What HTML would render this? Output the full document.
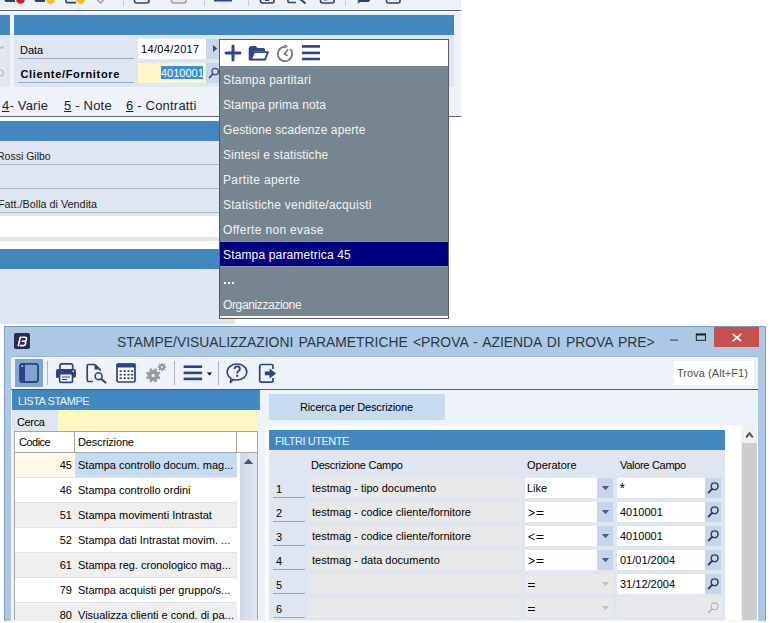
<!DOCTYPE html>
<html><head><meta charset="utf-8">
<style>
*{margin:0;padding:0;box-sizing:border-box}
html,body{width:770px;height:623px;overflow:hidden;background:#fff;font-family:"Liberation Sans",sans-serif;font-size:11px;color:#000}
.a{position:absolute}
.t{position:absolute;white-space:nowrap;line-height:1}
</style></head><body>
<!-- ============ TOP BACKGROUND WINDOW ============ -->
<div class="a" style="left:0;top:0;width:461px;height:10px;background:#eef1f9"></div>
<svg class="a" style="left:0;top:0" width="461" height="10" viewBox="0 0 461 10">
<g fill="none" stroke="#2d3f7c" stroke-width="2">
<path d="M5.5 -2 V0 Q5.5 1 6.5 1 H15" stroke-width="2.2"/>
<path d="M35.5 -2 V0 Q35.5 1 36.5 1 H45" stroke-width="2.2"/>
<path d="M66 -3 V1.5 Q66 2.6 67 2.6 H76" stroke-width="1.6"/>
<rect x="134.5" y="-6" width="14.5" height="9" rx="2" stroke-width="1.6"/>
<rect x="260.5" y="-6" width="13.5" height="9" rx="2" stroke-width="1.6"/>
<rect x="320.5" y="-6" width="13.5" height="9" rx="2" stroke-width="1.6"/>
<rect x="386.5" y="-6" width="13.5" height="9" rx="2" stroke-width="1.6"/>
<path d="M288 -3 V1.5 Q288 2.5 289 2.5 H296" stroke-width="1.6"/>
<path d="M300 -1 L305.5 3.5" stroke-width="2"/>
</g>
<rect x="171.5" y="-6" width="14.5" height="9" rx="2" fill="#e9e9e9" stroke="#9e9e9e" stroke-width="1.6"/>
<rect x="214" y="-2" width="18" height="3.5" fill="#2d3f7c"/>
<rect x="265" y="-2" width="4" height="3" fill="#2d3f7c"/>
<rect x="324" y="-2" width="3" height="2.5" fill="#2d3f7c"/>
<path d="M357 -3 H370 V0 Q370 2 367 2 H361 L357 3.5 L358.5 1 Q357 0 357 -1 Z" fill="#2d3f7c"/>
<path d="M96.5 -1 L100.5 3 L104.5 -1" fill="none" stroke="#a0a0a0" stroke-width="1.5"/>
<circle cx="20.5" cy="-0.5" r="4.3" fill="#c8202a"/>
<circle cx="50.5" cy="-0.5" r="4.4" fill="#efc21a"/>
<circle cx="80.7" cy="-0.5" r="4.4" fill="#efc21a"/>
<g stroke="#c9ced8" stroke-width="1"><path d="M123.5 0 V6"/><path d="M204.5 0 V6"/><path d="M248.5 0 V6"/><path d="M345.5 0 V6"/></g>
</svg>
<div class="a" style="left:0;top:11px;width:461px;height:106px;background:#eef2f9"></div>
<div class="a" style="left:0;top:9px;width:461px;height:1px;background:#f8fbff"></div>
<div class="a" style="left:0;top:10px;width:461px;height:1px;background:#505b68"></div>
<div class="a" style="left:0;top:11px;width:461px;height:1px;background:#fafcff"></div>
<div class="a" style="left:0;top:14px;width:10px;height:1px;background:#dcf0fa"></div>
<div class="a" style="left:14px;top:14px;width:440px;height:1px;background:#dcf0fa"></div>
<div class="a" style="left:0;top:15px;width:10px;height:20px;background:#4387c1"></div>
<div class="a" style="left:14px;top:15px;width:440px;height:20px;background:#4387c1"></div>
<div class="a" style="left:0;top:35px;width:10px;height:52px;background:#dfe6f1"></div>
<div class="a" style="left:0;top:35px;width:10px;height:1px;background:#d3ebf9"></div>
<div class="a" style="left:0;top:39px;width:6px;height:20px;background:#e6e9ee"></div>
<div class="a" style="left:0;top:63px;width:6px;height:20px;background:#e6e9ee"></div>
<div class="a" style="left:14px;top:35px;width:440px;height:52px;background:#dfe6f1"></div>
<div class="a" style="left:14px;top:35px;width:440px;height:1px;background:#d3ebf9"></div>
<div class="a" style="left:18px;top:58px;width:116px;height:1px;background:#97aac0"></div>
<div class="a" style="left:18px;top:82px;width:116px;height:1px;background:#97aac0"></div>
<div class="t" style="left:20px;top:45px;font-size:11px">Data</div>
<div class="t" style="left:20.5px;top:69px;font-size:11px;letter-spacing:0.68px;font-weight:bold">Cliente/Fornitore</div>
<div class="a" style="left:138px;top:39px;width:68px;height:20px;background:#fff"></div>
<div class="a" style="left:206px;top:39px;width:13px;height:20px;background:#c9d7ea"></div>
<div class="t" style="left:141px;top:44px;font-size:11px;letter-spacing:0.35px">14/04/2017</div>
<div class="a" style="left:138px;top:63px;width:68px;height:20px;background:#fdf6c6"></div>
<div class="a" style="left:206px;top:63px;width:13px;height:20px;background:#c9d7ea"></div>
<div class="a" style="left:161px;top:66px;width:42px;height:13px;background:#3b8fdd"></div>
<div class="t" style="left:161px;top:68px;font-size:11px;color:#fff">4010001</div>

<svg class="a" style="left:0;top:35px" width="220" height="52" viewBox="0 35 220 52">
<path d="M213 45 L217.3 48.5 L213 52 Z" fill="#3b4a68"/>
<circle cx="215.2" cy="71.6" r="3.2" fill="none" stroke="#3b4a68" stroke-width="1.3"/>
<path d="M212.8 74 L209.5 77.6" stroke="#3b4a68" stroke-width="1.6" stroke-linecap="round"/>
<path d="M-1 46 L1.5 48.5 L4 46" fill="none" stroke="#b0b0b0" stroke-width="1.2"/>
<circle cx="0.5" cy="73" r="3" fill="none" stroke="#b8b8b8" stroke-width="1.2"/>
</svg>
<div class="t" style="left:2px;top:99px;font-size:13px;letter-spacing:0.2px;color:#1c2330"><u>4</u>- Varie</div>
<div class="t" style="left:64px;top:99px;font-size:13px;letter-spacing:0.2px;color:#1c2330"><u>5</u> - Note</div>
<div class="t" style="left:126px;top:99px;font-size:13px;letter-spacing:0.2px;color:#1c2330"><u>6</u> - Contratti</div>
<div class="a" style="left:0;top:116px;width:461px;height:1px;background:#5f6670"></div>

<div class="a" style="left:0;top:117px;width:235px;height:207px;background:#dfe6f1"></div>
<div class="a" style="left:0;top:117px;width:235px;height:4px;background:#f6fbfe"></div>
<div class="a" style="left:0;top:121px;width:235px;height:20px;background:#4387c1;border-top:1px solid #4a82b4;border-bottom:1px solid #4a7eae"></div>
<div class="a" style="left:0;top:141px;width:235px;height:1px;background:#d3ebf9"></div>
<div class="a" style="left:0;top:164px;width:235px;height:1px;background:#a9bbd0"></div>
<div class="a" style="left:0;top:188px;width:235px;height:1px;background:#a9bbd0"></div>
<div class="a" style="left:0;top:212px;width:235px;height:1px;background:#a9bbd0"></div>
<div class="t" style="left:-3px;top:151px;font-size:10.5px;color:#1a1a1a">Rossi Gilbo</div>
<div class="t" style="left:-2px;top:199px;font-size:10.8px;color:#1a1a1a">Fatt./Bolla di Vendita</div>
<div class="a" style="left:0;top:216px;width:235px;height:21px;background:#fff"></div>
<div class="a" style="left:0;top:241px;width:235px;height:8px;background:#fff"></div>
<div class="a" style="left:0;top:249px;width:235px;height:20px;background:#4387c1"></div>

<!-- ============ POPUP MENU ============ -->
<div class="a" style="left:219px;top:39px;width:230px;height:280px;border:1px solid #5a5a5a;background:#768590"></div>
<div class="a" style="left:220px;top:40px;width:228px;height:26px;background:#fff"></div>
<div class="a" style="left:220px;top:316px;width:228px;height:2px;background:#f4f6fa"></div>
<svg class="a" style="left:220px;top:40px" width="228" height="26" viewBox="0 0 228 26">
<g stroke="#2e4590" stroke-width="3" stroke-linecap="round" fill="none">
<path d="M6 13 H20"/><path d="M13 6 V20"/>
</g>
<path d="M29 8 Q29 6 31 6 H35.5 L37.5 8 H43.5 Q45 8 45 9.5 V11.2 H34 L31.2 19.8 H29 Z" fill="#2e4590"/>
<path d="M34.2 12.2 H48 L45 19.6 H30.8 Z" fill="none" stroke="#2e4590" stroke-width="1.8" stroke-linejoin="round"/>
<path d="M29.5 8 V19.5 H45" fill="none" stroke="#2e4590" stroke-width="1.6"/>
<path d="M70.1 9 A7.2 7.2 0 1 1 64.4 6.8" fill="none" stroke="#7a7a7a" stroke-width="1.8"/>
<path d="M64.4 4.2 L68.2 6.4 L64.4 8.6 Z" fill="#7a7a7a"/>
<path d="M68 9.3 L64.6 14 L67.8 15.8" fill="none" stroke="#7a7a7a" stroke-width="1.7"/>
<g stroke="#2e4590" stroke-width="2.6"><path d="M82 6.4 H100"/><path d="M82 12.9 H100"/><path d="M82 19 H100"/></g>
</svg>
<div class="a" style="left:220px;top:241px;width:228px;height:1px;background:#8290c6"></div>
<div class="a" style="left:220px;top:242px;width:228px;height:24px;background:#000080"></div>
<div class="a" style="left:220px;top:266px;width:228px;height:1px;background:#8794a6"></div>
<div class="t" style="left:223px;top:74px;letter-spacing:0.21px;font-size:12px;color:#f4f4f4">Stampa partitari</div>
<div class="t" style="left:223px;top:99px;letter-spacing:0.09px;font-size:12px;color:#f4f4f4">Stampa prima nota</div>
<div class="t" style="left:223px;top:124px;letter-spacing:0.10px;font-size:12px;color:#f4f4f4">Gestione scadenze aperte</div>
<div class="t" style="left:223px;top:149px;letter-spacing:0.12px;font-size:12px;color:#f4f4f4">Sintesi e statistiche</div>
<div class="t" style="left:223px;top:174px;letter-spacing:0.36px;font-size:12px;color:#f4f4f4">Partite aperte</div>
<div class="t" style="left:223px;top:199px;letter-spacing:0.26px;font-size:12px;color:#f4f4f4">Statistiche vendite/acquisti</div>
<div class="t" style="left:223px;top:224px;letter-spacing:0.33px;font-size:12px;color:#f4f4f4">Offerte non evase</div>
<div class="t" style="left:223px;top:249px;letter-spacing:0.15px;font-size:12px;color:#fff">Stampa parametrica 45</div>
<div class="a" style="left:224px;top:282px;width:2px;height:2px;background:#f4f4f4"></div><div class="a" style="left:228px;top:282px;width:2px;height:2px;background:#f4f4f4"></div><div class="a" style="left:232px;top:282px;width:2px;height:2px;background:#f4f4f4"></div>
<div class="t" style="left:223px;top:299px;letter-spacing:-0.37px;font-size:12px;color:#f4f4f4">Organizzazione</div>

<!-- ============ BOTTOM WINDOW ============ -->
<div class="a" style="left:4px;top:326px;width:762px;height:297px;background:#adc8e4;border:1px solid #7d9cc0;border-bottom:none"></div>
<div class="a" style="left:14px;top:333px;width:16px;height:16px;background:#2b2a57;border-radius:2px"></div>
<svg class="a" style="left:14px;top:333px" width="16" height="16" viewBox="14 333 16 16">
<path d="M18.3 345.6 L20.3 337.2" stroke="#fff" stroke-width="1.6" stroke-linecap="round"/>
<path d="M21.2 337.3 H25 Q26.8 337.3 26.4 339.2 L26.2 340 Q25.9 341.2 24.4 341.3 H21.6 M24.4 341.3 Q26 341.5 25.6 343.3 L25.4 344.2 Q25.1 345.6 23.5 345.6 H19.8" fill="none" stroke="#fff" stroke-width="1.6"/>
</svg>
<div class="t" style="left:116.5px;top:334px;font-size:15px;transform:scaleX(0.925);transform-origin:0 0;word-spacing:1.5px;color:#283746">STAMPE/VISUALIZZAZIONI PARAMETRICHE &lt;PROVA - AZIENDA DI PROVA PRE&gt;</div>
<div class="a" style="left:714px;top:327px;width:45px;height:20px;background:#c75050"></div>
<svg class="a" style="left:660px;top:327px" width="100" height="20" viewBox="660 327 100 20">
<path d="M732.8 334.2 L741.2 341.2 M741.2 334.2 L732.8 341.2" stroke="#fff" stroke-width="1.7"/>
<rect x="696.3" y="334.3" width="9.2" height="6" fill="none" stroke="#1f1f1f" stroke-width="1"/>
<rect x="696" y="333.5" width="10" height="2" fill="#1f1f1f"/>
<rect x="670" y="339.3" width="8" height="1.6" fill="#5b6e86"/>
</svg>

<div class="a" style="left:11px;top:356px;width:747px;height:34px;background:#eef2f9;border-top:1px solid #9fb6d1"></div>
<div class="a" style="left:11px;top:389px;width:747px;height:1px;background:#4f5d6e"></div>
<div class="a" style="left:15px;top:359px;width:28px;height:28px;background:#7fa7d1"></div>
<svg class="a" style="left:11px;top:356px" width="280" height="34" viewBox="11 356 280 34">
<!-- panel icon -->
<rect x="20" y="363.8" width="18" height="18.2" rx="2.5" fill="#7ea7d0" stroke="#2e4187" stroke-width="1.8"/>
<path d="M20 366 Q20 363 22.5 363 H25 V383 H22.5 Q20 383 20 380.5 Z" fill="#2e4187"/>
<circle cx="22.3" cy="366.2" r="0.9" fill="#c8d8ee"/>
<!-- separators -->
<g stroke="#aab3bf" stroke-width="1"><path d="M47.5 361 V385"/><path d="M174.5 361 V385"/><path d="M218.5 361 V385"/></g>
<!-- printer -->
<path d="M60 369 V365.5 Q60 363.8 61.7 363.8 H71 Q72.7 363.8 72.7 365.5 V369" fill="none" stroke="#2e4187" stroke-width="1.7"/>
<path d="M56 371 Q56 369 58 369 H74 Q76 369 76 371 V376 Q76 377.8 74.2 377.8 H56 Z" fill="#2e4187"/>
<rect x="59.6" y="373.8" width="12.9" height="8.6" rx="1.2" fill="#eef2f9" stroke="#2e4187" stroke-width="1.6"/>
<path d="M62 377 H70 M62 379.5 H67" stroke="#2e4187" stroke-width="1"/>
<circle cx="73.3" cy="371.4" r="0.8" fill="#fff"/>
<!-- doc magnifier -->
<path d="M95 364.5 H88.5 Q87.2 364.5 87.2 366 V380 Q87.2 381.5 88.5 381.5 H93" fill="none" stroke="#2e4187" stroke-width="1.7"/>
<path d="M94.5 364 L100.5 369.5 H94.5 Z" fill="#2e4187"/>
<path d="M95 364.5 L100.2 369.5 V371" fill="none" stroke="#2e4187" stroke-width="1.5"/>
<circle cx="98.6" cy="376.3" r="3.5" fill="none" stroke="#2e4187" stroke-width="1.6"/>
<path d="M101.2 378.9 L105.4 382.6" stroke="#2e4187" stroke-width="2" stroke-linecap="round"/>
<!-- calendar -->
<rect x="117" y="364" width="18" height="18" rx="1.5" fill="#fff" stroke="#2e4187" stroke-width="1.7"/>
<rect x="116.5" y="363.4" width="19" height="4" rx="1.2" fill="#2e4187"/>
<g fill="#2e4187">
<rect x="119.6" y="370.3" width="2.2" height="1.7"/><rect x="123.6" y="370.3" width="2.2" height="1.7"/><rect x="127.4" y="370.3" width="2.2" height="1.7"/><rect x="131" y="370.3" width="2.2" height="1.7"/>
<rect x="119.6" y="373.8" width="2.2" height="1.7"/><rect x="123.6" y="373.8" width="2.2" height="1.7"/><rect x="127.4" y="373.8" width="2.2" height="1.7"/><rect x="131" y="373.8" width="2.2" height="1.7"/>
<rect x="119.6" y="377.3" width="2.2" height="1.7"/><rect x="123.6" y="377.3" width="2.2" height="1.7"/><rect x="127.4" y="377.3" width="2.2" height="1.7"/><rect x="131" y="377.3" width="2.2" height="1.7"/>
</g>
<!-- gears -->
<circle cx="153.2" cy="375.4" r="5.6" fill="#9b9b9b"/><path d="M157.45 377.16 L159.94 378.19 M154.96 379.65 L155.99 382.14 M151.44 379.65 L150.41 382.14 M148.95 377.16 L146.46 378.19 M148.95 373.64 L146.46 372.61 M151.44 371.15 L150.41 368.66 M154.96 371.15 L155.99 368.66 M157.45 373.64 L159.94 372.61 " stroke="#9b9b9b" stroke-width="2.4"/><circle cx="153.2" cy="375.4" r="1.7" fill="#eef2f9"/>
<circle cx="162" cy="367.1" r="3.1" fill="#9b9b9b"/><path d="M164.10 367.10 L166.20 367.10 M163.48 368.58 L164.97 370.07 M162.00 369.20 L162.00 371.30 M160.52 368.58 L159.03 370.07 M159.90 367.10 L157.80 367.10 M160.52 365.62 L159.03 364.13 M162.00 365.00 L162.00 362.90 M163.48 365.62 L164.97 364.13 " stroke="#9b9b9b" stroke-width="1.5"/><circle cx="162" cy="367.1" r="1.0" fill="#eef2f9"/>
<!-- hamburger -->
<g stroke="#2e4187" stroke-width="2.6"><path d="M183.6 366.7 H202.1"/><path d="M183.6 372.9 H202.1"/><path d="M183.6 378.9 H202.1"/></g>
<path d="M206.8 372.4 H212.2 L209.5 375.4 Z" fill="#000"/>
<!-- help -->
<path d="M237 364 C242.6 364 246.8 367.4 246.8 372 C246.8 376.6 242.6 380 237 380 C235.6 380 234.4 379.8 233.2 379.4 L230.5 382.4 L230.9 378.2 C228.7 376.8 227.2 374.6 227.2 372 C227.2 367.4 231.4 364 237 364 Z" fill="none" stroke="#2e4187" stroke-width="1.6" stroke-linejoin="round"/>
<path d="M234.6 368.9 Q234.6 366.4 237.2 366.4 Q239.9 366.4 239.9 368.8 Q239.9 370.4 238.2 371.2 Q237.2 371.7 237.2 373.4" fill="none" stroke="#2e4187" stroke-width="1.8"/><circle cx="237.2" cy="375.9" r="1.1" fill="#2e4187"/>
<!-- exit -->
<path d="M273 369 V366 Q273 364.5 271.5 364.5 H261.2 Q259.7 364.5 259.7 366 V380.7 Q259.7 382.2 261.2 382.2 H271.5 Q273 382.2 273 380.7 V378" fill="none" stroke="#2e4187" stroke-width="1.7"/>
<path d="M264.8 371.6 H269.6 V368.4 L276 373.4 L269.6 378.4 V375.2 H264.8 Z" fill="#2e4187"/>
</svg>
<div class="a" style="left:674px;top:361px;width:80px;height:24px;background:#fff"></div>
<div class="t" style="left:677px;top:368px;font-size:11px;letter-spacing:0.05px;color:#505050">Trova (Alt+F1)</div>

<div class="a" style="left:11px;top:390px;width:747px;height:233px;background:#eef2f9"></div>
<div class="a" style="left:12px;top:390px;width:248px;height:20px;background:#4387c1"></div>
<div class="t" style="left:18px;top:396px;font-size:11px;letter-spacing:-0.45px;color:#e8f4ff">LISTA STAMPE</div>
<div class="a" style="left:12px;top:410px;width:246px;height:21px;background:#dfe6f1"></div>
<div class="a" style="left:58px;top:410px;width:200px;height:21px;background:#fdf8c2"></div>
<div class="t" style="left:17px;top:417px;font-size:11px;letter-spacing:-0.35px">Cerca</div>


<!-- grid -->
<div class="a" style="left:14px;top:431px;width:244px;height:189px;background:#fff;border:1px solid #a6a6a6;border-bottom:none"></div>
<div class="a" style="left:15px;top:452px;width:242px;height:1px;background:#a6a6a6"></div>
<div class="a" style="left:74px;top:432px;width:1px;height:20px;background:#a6a6a6"></div>
<div class="a" style="left:236px;top:432px;width:1px;height:20px;background:#a6a6a6"></div>
<div class="t" style="left:19px;top:437px;font-size:11px;letter-spacing:-0.5px">Codice</div>
<div class="t" style="left:78px;top:437px;font-size:11px;letter-spacing:-0.15px">Descrizione</div>
<div class="a" style="left:15px;top:453px;width:60px;height:24px;background:#fdf8ea"></div>
<div class="a" style="left:75px;top:453px;width:162px;height:24px;background:#c5dcf4"></div>
<div class="a" style="left:15px;top:477px;width:222px;height:1px;background:#dde3ea"></div>
<div class="t" style="left:15px;width:57px;text-align:right;top:460px;font-size:11px">45</div>
<div class="t" style="left:78px;top:460px;font-size:11px">Stampa controllo docum. mag...</div>
<div class="a" style="left:15px;top:502px;width:222px;height:1px;background:#dde3ea"></div>
<div class="t" style="left:15px;width:57px;text-align:right;top:485px;font-size:11px">46</div>
<div class="t" style="left:78px;top:485px;font-size:11px">Stampa controllo ordini</div>
<div class="a" style="left:15px;top:503px;width:222px;height:24px;background:#efefef"></div>
<div class="a" style="left:15px;top:527px;width:222px;height:1px;background:#dde3ea"></div>
<div class="t" style="left:15px;width:57px;text-align:right;top:510px;font-size:11px">51</div>
<div class="t" style="left:78px;top:510px;font-size:11px">Stampa movimenti Intrastat</div>
<div class="a" style="left:15px;top:552px;width:222px;height:1px;background:#dde3ea"></div>
<div class="t" style="left:15px;width:57px;text-align:right;top:535px;font-size:11px">52</div>
<div class="t" style="left:78px;top:535px;font-size:11px">Stampa dati Intrastat movim. ...</div>
<div class="a" style="left:15px;top:553px;width:222px;height:24px;background:#efefef"></div>
<div class="a" style="left:15px;top:577px;width:222px;height:1px;background:#dde3ea"></div>
<div class="t" style="left:15px;width:57px;text-align:right;top:560px;font-size:11px">61</div>
<div class="t" style="left:78px;top:560px;font-size:11px">Stampa reg. cronologico mag...</div>
<div class="a" style="left:15px;top:602px;width:222px;height:1px;background:#dde3ea"></div>
<div class="t" style="left:15px;width:57px;text-align:right;top:585px;font-size:11px">79</div>
<div class="t" style="left:78px;top:585px;font-size:11px">Stampa acquisti per gruppo/s...</div>
<div class="a" style="left:15px;top:603px;width:222px;height:24px;background:#efefef"></div>
<div class="a" style="left:15px;top:627px;width:222px;height:1px;background:#dde3ea"></div>
<div class="t" style="left:15px;width:57px;text-align:right;top:610px;font-size:11px">80</div>
<div class="t" style="left:78px;top:610px;font-size:11px">Visualizza clienti e cond. di pa...</div>
<div class="a" style="left:240px;top:453px;width:17px;height:167px;background:linear-gradient(90deg,#cfd9e6,#dde6f1)"></div>
<svg class="a" style="left:240px;top:453px" width="17" height="20" viewBox="240 453 17 20"><path d="M243.8 463.9 L248.4 458.8 L253.1 463.9 Z" fill="#4a5470"/></svg>

<!-- right panel -->
<div class="a" style="left:269px;top:394px;width:176px;height:26px;background:#c6daf1"></div>
<div class="t" style="left:300px;top:402px;font-size:11px;letter-spacing:-0.17px">Ricerca per Descrizione</div>
<div class="a" style="left:265px;top:426px;width:476px;height:194px;background:#fff"></div>
<div class="a" style="left:269px;top:430px;width:456px;height:190px;background:#dfe6f1"></div>
<div class="a" style="left:269px;top:430px;width:456px;height:20px;background:#4387c1"></div>
<div class="t" style="left:275px;top:436px;font-size:11px;letter-spacing:-0.45px;color:#e8f4ff">FILTRI UTENTE</div>
<div class="t" style="left:311px;top:460px;font-size:11px;letter-spacing:-0.25px">Descrizione Campo</div>
<div class="t" style="left:527px;top:460px;font-size:11px">Operatore</div>
<div class="t" style="left:620px;top:460px;font-size:11px;letter-spacing:-0.3px">Valore Campo</div>
<div class="a" style="left:742px;top:426px;width:15px;height:194px;background:#cdcdcd"></div>
<div class="a" style="left:742px;top:426px;width:15px;height:17px;background:#f0f0f0"></div>
<div class="a" style="left:757px;top:426px;width:1px;height:194px;background:#fff"></div>
<svg class="a" style="left:742px;top:426px" width="15" height="17" viewBox="742 426 15 17"><path d="M746.2 437.3 L749.5 433.3 L752.8 437.3" fill="none" stroke="#505050" stroke-width="2"/></svg>
<div class="t" style="left:276px;top:484px;font-size:11px">1</div>
<div class="a" style="left:273px;top:497px;width:32px;height:1px;background:#8ea7c4"></div>
<div class="a" style="left:309px;top:478px;width:212px;height:20px;background:#e9e9e9"></div>
<div class="t" style="left:312px;top:483px;font-size:11px">testmag - tipo documento</div>
<div class="a" style="left:525px;top:478px;width:72px;height:20px;background:#fff"></div>
<div class="a" style="left:597px;top:478px;width:16px;height:20px;background:#c5d6ec"></div>
<div class="t" style="left:527px;top:483px;font-size:11px">Like</div>
<div class="a" style="left:617px;top:478px;width:88px;height:20px;background:#fff"></div>
<div class="a" style="left:705px;top:478px;width:16px;height:20px;background:#c5d6ec"></div>
<div class="t" style="left:619.5px;top:481px;font-size:14px">*</div>
<div class="t" style="left:276px;top:508px;font-size:11px">2</div>
<div class="a" style="left:273px;top:521px;width:32px;height:1px;background:#8ea7c4"></div>
<div class="a" style="left:309px;top:502px;width:212px;height:20px;background:#e9e9e9"></div>
<div class="t" style="left:312px;top:507px;font-size:11px">testmag - codice cliente/fornitore</div>
<div class="a" style="left:525px;top:502px;width:72px;height:20px;background:#fff"></div>
<div class="a" style="left:597px;top:502px;width:16px;height:20px;background:#c5d6ec"></div>
<div class="a" style="left:617px;top:502px;width:88px;height:20px;background:#fff"></div>
<div class="a" style="left:705px;top:502px;width:16px;height:20px;background:#c5d6ec"></div>
<div class="t" style="left:620px;top:507px;font-size:11px">4010001</div>
<div class="t" style="left:276px;top:532px;font-size:11px">3</div>
<div class="a" style="left:273px;top:545px;width:32px;height:1px;background:#8ea7c4"></div>
<div class="a" style="left:309px;top:526px;width:212px;height:20px;background:#e9e9e9"></div>
<div class="t" style="left:312px;top:531px;font-size:11px">testmag - codice cliente/fornitore</div>
<div class="a" style="left:525px;top:526px;width:72px;height:20px;background:#fff"></div>
<div class="a" style="left:597px;top:526px;width:16px;height:20px;background:#c5d6ec"></div>
<div class="a" style="left:617px;top:526px;width:88px;height:20px;background:#fff"></div>
<div class="a" style="left:705px;top:526px;width:16px;height:20px;background:#c5d6ec"></div>
<div class="t" style="left:620px;top:531px;font-size:11px">4010001</div>
<div class="t" style="left:276px;top:556px;font-size:11px">4</div>
<div class="a" style="left:273px;top:569px;width:32px;height:1px;background:#8ea7c4"></div>
<div class="a" style="left:309px;top:550px;width:212px;height:20px;background:#e9e9e9"></div>
<div class="t" style="left:312px;top:555px;font-size:11px">testmag - data documento</div>
<div class="a" style="left:525px;top:550px;width:72px;height:20px;background:#fff"></div>
<div class="a" style="left:597px;top:550px;width:16px;height:20px;background:#c5d6ec"></div>
<div class="a" style="left:617px;top:550px;width:88px;height:20px;background:#fff"></div>
<div class="a" style="left:705px;top:550px;width:16px;height:20px;background:#c5d6ec"></div>
<div class="t" style="left:620px;top:555px;font-size:11px">01/01/2004</div>
<div class="t" style="left:276px;top:580px;font-size:11px">5</div>
<div class="a" style="left:273px;top:593px;width:32px;height:1px;background:#8ea7c4"></div>
<div class="a" style="left:309px;top:574px;width:212px;height:20px;background:#e9e9e9"></div>
<div class="t" style="left:312px;top:579px;font-size:11px"></div>
<div class="a" style="left:525px;top:574px;width:72px;height:20px;background:#e9e9e9"></div>
<div class="a" style="left:597px;top:574px;width:16px;height:20px;background:#e9e9e9"></div>
<div class="a" style="left:617px;top:574px;width:88px;height:20px;background:#fff"></div>
<div class="a" style="left:705px;top:574px;width:16px;height:20px;background:#c5d6ec"></div>
<div class="t" style="left:620px;top:579px;font-size:11px">31/12/2004</div>
<div class="t" style="left:276px;top:604px;font-size:11px">6</div>
<div class="a" style="left:273px;top:617px;width:32px;height:1px;background:#8ea7c4"></div>
<div class="a" style="left:309px;top:598px;width:212px;height:20px;background:#e9e9e9"></div>
<div class="t" style="left:312px;top:603px;font-size:11px"></div>
<div class="a" style="left:525px;top:598px;width:72px;height:20px;background:#e9e9e9"></div>
<div class="a" style="left:597px;top:598px;width:16px;height:20px;background:#e9e9e9"></div>
<div class="a" style="left:617px;top:598px;width:88px;height:20px;background:#e9e9e9"></div>
<div class="a" style="left:705px;top:598px;width:16px;height:20px;background:#e9e9e9"></div>
<div class="t" style="left:620px;top:603px;font-size:11px"></div>
<svg class="a" style="left:520px;top:470px" width="40" height="150" viewBox="520 470 40 150">
<path d="M528.6 509.8 L534.6 512.8 L528.6 515.8" fill="none" stroke="#000" stroke-width="1"/><path d="M536.5 511.5 H543.5 M536.5 514.5 H543.5" stroke="#000" stroke-width="1"/>
<path d="M534.6 533.8 L528.6 536.8 L534.6 539.8" fill="none" stroke="#000" stroke-width="1"/><path d="M536.5 535.5 H543.5 M536.5 538.5 H543.5" stroke="#000" stroke-width="1"/>
<path d="M528.6 557.8 L534.6 560.8 L528.6 563.8" fill="none" stroke="#000" stroke-width="1"/><path d="M536.5 559.5 H543.5 M536.5 562.5 H543.5" stroke="#000" stroke-width="1"/>
<path d="M528 583.5 H535 M528 586.5 H535" stroke="#000" stroke-width="1"/>
<path d="M528 607.5 H535 M528 610.5 H535" stroke="#000" stroke-width="1"/>
</svg>
<svg class="a" style="left:590px;top:470px" width="140" height="150" viewBox="590 470 140 150">
<path d="M601.8 485.9 H609.2 L605.5 490.2 Z" fill="#4d5a78"/>
<circle cx="714.6" cy="486.3" r="3.4" fill="none" stroke="#2f3f5f" stroke-width="1.4"/><path d="M712.1 489 L708.6 492.5" stroke="#2f3f5f" stroke-width="1.9" stroke-linecap="round"/>
<path d="M601.8 509.9 H609.2 L605.5 514.2 Z" fill="#4d5a78"/>
<circle cx="714.6" cy="510.3" r="3.4" fill="none" stroke="#2f3f5f" stroke-width="1.4"/><path d="M712.1 513 L708.6 516.5" stroke="#2f3f5f" stroke-width="1.9" stroke-linecap="round"/>
<path d="M601.8 533.9 H609.2 L605.5 538.2 Z" fill="#4d5a78"/>
<circle cx="714.6" cy="534.3" r="3.4" fill="none" stroke="#2f3f5f" stroke-width="1.4"/><path d="M712.1 537 L708.6 540.5" stroke="#2f3f5f" stroke-width="1.9" stroke-linecap="round"/>
<path d="M601.8 557.9 H609.2 L605.5 562.2 Z" fill="#4d5a78"/>
<circle cx="714.6" cy="558.3" r="3.4" fill="none" stroke="#2f3f5f" stroke-width="1.4"/><path d="M712.1 561 L708.6 564.5" stroke="#2f3f5f" stroke-width="1.9" stroke-linecap="round"/>
<path d="M601.8 581.9 H609.2 L605.5 586.2 Z" fill="#c3c3c3"/>
<circle cx="714.6" cy="582.3" r="3.4" fill="none" stroke="#2f3f5f" stroke-width="1.4"/><path d="M712.1 585 L708.6 588.5" stroke="#2f3f5f" stroke-width="1.9" stroke-linecap="round"/>
<path d="M601.8 605.9 H609.2 L605.5 610.2 Z" fill="#c3c3c3"/>
<circle cx="714.6" cy="606.3" r="3.4" fill="none" stroke="#b5b5b5" stroke-width="1.1"/><path d="M712.1 609 L708.6 612.5" stroke="#b5b5b5" stroke-width="1.5" stroke-linecap="round"/>
</svg>
<div class="a" style="left:0;top:621px;width:770px;height:2px;background:#fff"></div>
</body></html>
